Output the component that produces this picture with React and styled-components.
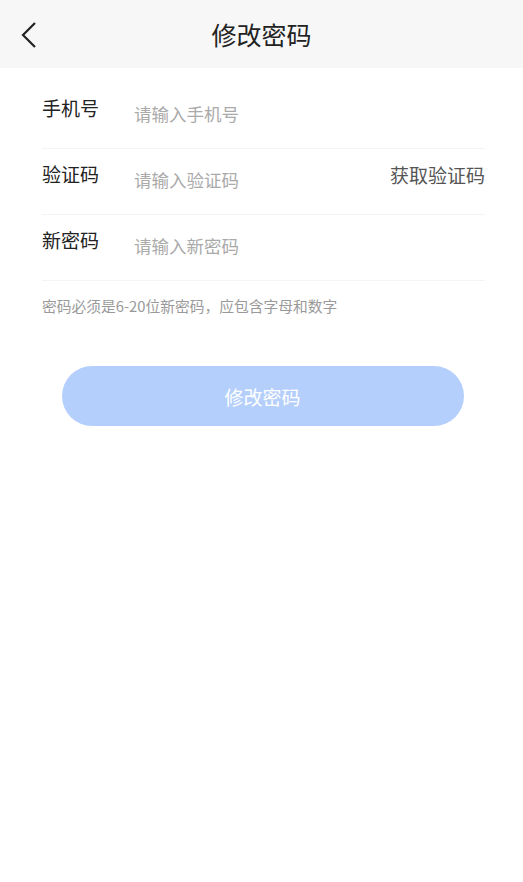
import styled, { createGlobalStyle } from "styled-components";

const GlobalStyle = createGlobalStyle`
  body {
    margin: 0;
    background: #fff;
    font-family: "Noto Sans CJK SC", "Noto Sans", sans-serif;
  }
`;

function App() {
  return (
    <>
      <GlobalStyle />
      <Page>
        <Header>
          <BackButton aria-label="返回">
            <svg width="20" height="30" viewBox="0 0 20 30">
              <polyline
                points="15,3 3,15 15,27"
                fill="none"
                stroke="#222"
                strokeWidth="2.2"
              />
            </svg>
          </BackButton>
          <Title>修改密码</Title>
        </Header>
        <Form>
          <Row>
            <Label>手机号</Label>
            <Input placeholder="请输入手机号" />
          </Row>
          <Row>
            <Label>验证码</Label>
            <Input placeholder="请输入验证码" />
            <CodeButton>获取验证码</CodeButton>
          </Row>
          <Row>
            <Label>新密码</Label>
            <Input placeholder="请输入新密码" type="password" />
          </Row>
          <Hint>密码必须是6-20位新密码，应包含字母和数字</Hint>
        </Form>
        <SubmitButton>修改密码</SubmitButton>
      </Page>
    </>
  );
}

export default App;

const Page = styled.div`
  min-height: 882px;
  background: #fff;
  display: flex;
  flex-direction: column;
`;

const Header = styled.div`
  position: relative;
  height: 68px;
  background: #f7f7f7;
  display: flex;
  align-items: center;
  justify-content: center;
`;

const BackButton = styled.button`
  position: absolute;
  left: 16px;
  top: 20px;
  width: 28px;
  height: 30px;
  padding: 0;
  border: none;
  background: transparent;
  display: flex;
  align-items: center;
  justify-content: center;
`;

const Title = styled.h1`
  margin: 0;
  font-size: 25px;
  font-weight: 400;
  color: #222;
  line-height: 1;
`;

const Form = styled.div`
  padding: 15px 38px 0 42px;
  display: flex;
  flex-direction: column;
`;

const Row = styled.div`
  box-sizing: border-box;
  height: 66px;
  display: flex;
  align-items: center;
  border-bottom: 1px solid #f4f4f4;
`;

const Label = styled.span`
  width: 92px;
  flex-shrink: 0;
  margin-bottom: 16px;
  font-size: 19px;
  color: #222;
  line-height: 1;
`;

const Input = styled.input`
  flex: 1;
  min-width: 0;
  margin-bottom: 5px;
  border: none;
  outline: none;
  padding: 0;
  background: transparent;
  font-family: inherit;
  font-size: 17.5px;
  color: #333;

  &::placeholder {
    color: #aaa;
  }
`;

const CodeButton = styled.span`
  margin-bottom: 14px;
  font-size: 19px;
  color: #555;
  line-height: 1;
  white-space: nowrap;
`;

const Hint = styled.p`
  margin: 15px 0 0;
  font-size: 14.75px;
  color: #999;
  line-height: 20px;
`;

const SubmitButton = styled.button`
  align-self: center;
  margin: 50px 0 0 2px;
  width: 402px;
  height: 60px;
  border: none;
  border-radius: 30px;
  background: #b5cffc;
  color: #fff;
  font-family: inherit;
  font-size: 19px;
`;
